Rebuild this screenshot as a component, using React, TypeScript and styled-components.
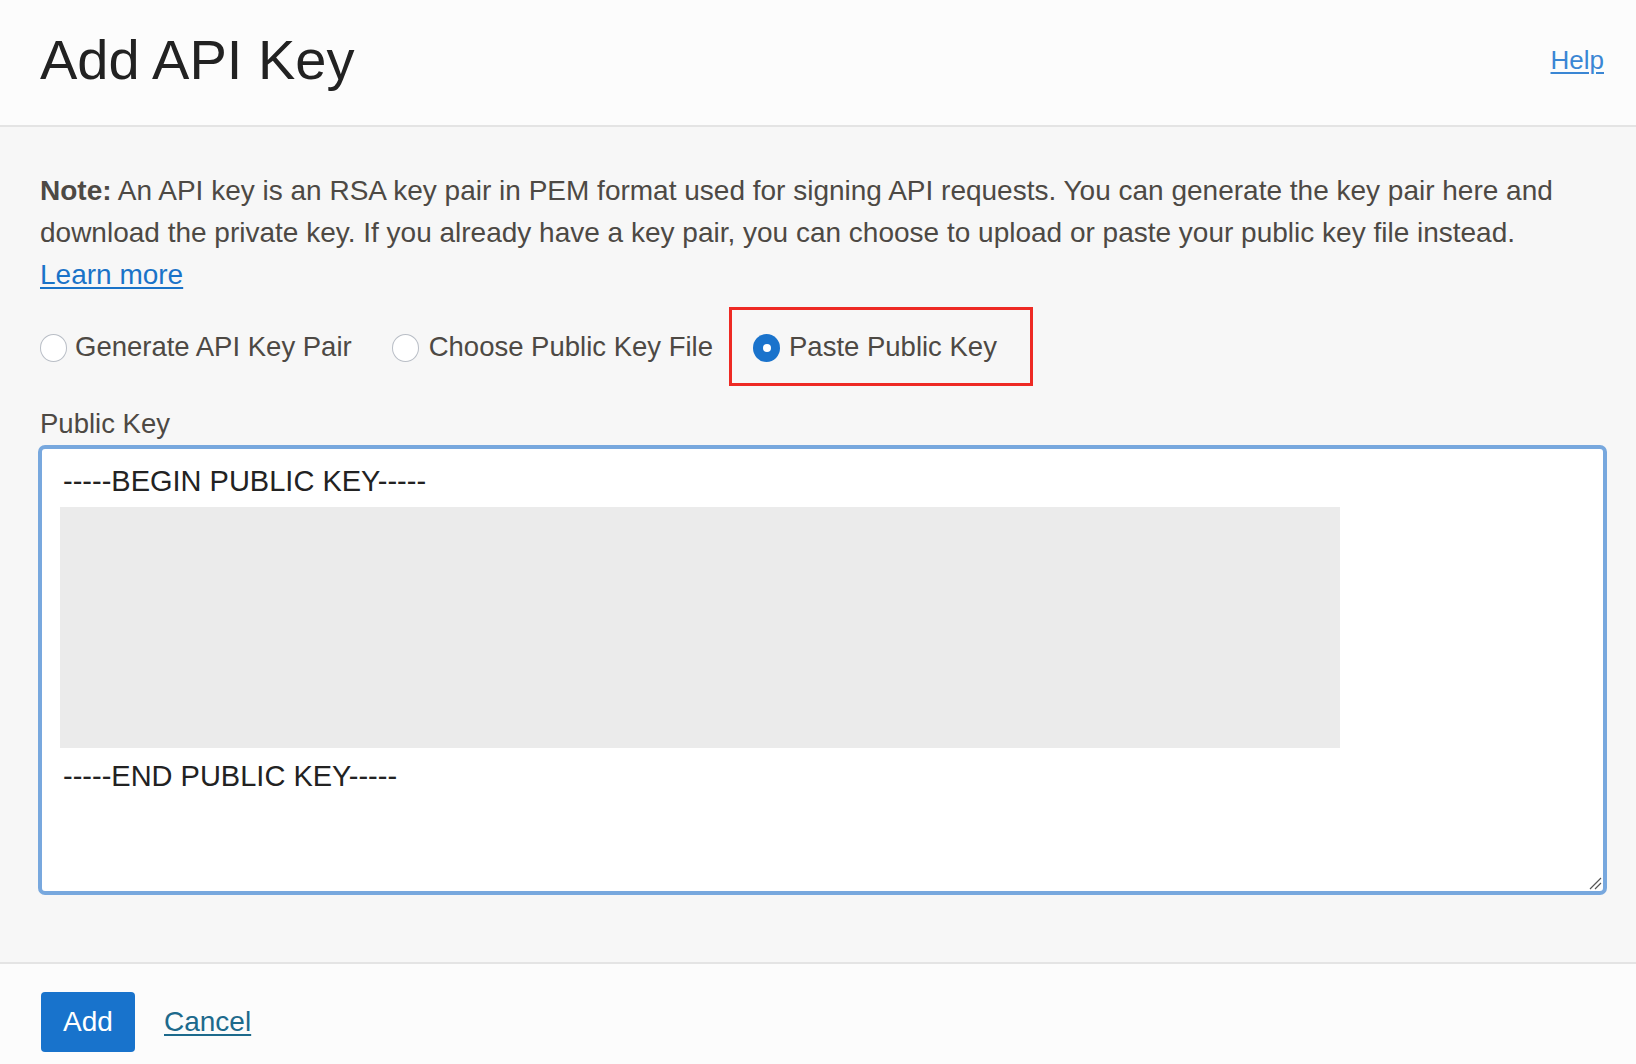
import React from "react";
import styled, { createGlobalStyle } from "styled-components";

const Global = createGlobalStyle`
  html, body { margin: 0; padding: 0; }
  body {
    background: #f7f7f7;
    font-family: "Liberation Sans", Arial, Helvetica, sans-serif;
    -webkit-font-smoothing: antialiased;
  }
`;

const Page = styled.div`
  width: 1636px;
  height: 1064px;
  display: flex;
  flex-direction: column;
  background: #f7f7f7;
  overflow: hidden;
`;

const Header = styled.header`
  box-sizing: content-box;
  display: flex;
  justify-content: space-between;
  align-items: flex-start;
  padding: 28px 32px 0 40px;
  height: 97px;
  flex: none;
  background: #fcfcfc;
  border-bottom: 2px solid #e4e4e4;
`;

const Title = styled.h1`
  margin: 0;
  font-size: 56px;
  line-height: 64px;
  font-weight: 400;
  color: #222;
`;

const HelpLink = styled.a`
  margin-top: 17px;
  font-size: 26px;
  line-height: 30px;
  color: #3a86d4;
  text-decoration: underline;
  text-underline-offset: 3px;
  font-weight: 300;
`;

const Body = styled.main`
  flex: 1;
  padding: 43px 29px 0 40px;
`;

const Note = styled.p`
  margin: 0;
  font-size: 28px;
  line-height: 42px;
  color: #4d4944;
`;

const Strong = styled.strong`
  font-weight: 700;
`;

const TextLink = styled.a`
  color: #1a73c8;
  text-decoration: underline;
  text-underline-offset: 3px;
  white-space: nowrap;
`;

const RadioGroup = styled.div`
  display: flex;
  align-items: center;
  gap: 40px;
  margin-top: 11px;
  height: 79px;
`;

const Option = styled.label<{ $gap: number }>`
  display: flex;
  align-items: center;
  gap: ${(p) => p.$gap}px;
  font-size: 27.5px;
  line-height: 32px;
  color: #4d4944;
`;

const Highlight = styled.div`
  display: flex;
  align-items: center;
  height: 79px;
  box-sizing: border-box;
  margin-left: -24px;
  padding: 0 33px 0 21px;
  border: 3px solid #ee2a24;
`;

const Circle = styled.span<{ $checked?: boolean }>`
  width: 27px;
  height: 28px;
  border-radius: 50%;
  box-sizing: border-box;
  flex: none;
  display: flex;
  align-items: center;
  justify-content: center;
  background: ${(p) => (p.$checked ? "#1a73cc" : "#ffffff")};
  border: ${(p) => (p.$checked ? "none" : "1.5px solid #b9bec6")};
  margin-top: 3px;
`;

const Dot = styled.span`
  width: 8px;
  height: 8px;
  border-radius: 50%;
  background: #fff;
`;

const FieldLabel = styled.div`
  margin-top: 22px;
  font-size: 27.5px;
  line-height: 32px;
  color: #4d4944;
`;

const KeyBox = styled.div`
  position: relative;
  margin: 5px 0 0 -2px;
  height: 450px;
  box-sizing: border-box;
  background: #fff;
  border: 4px solid #78a8de;
  border-radius: 7px;
  padding: 17px 20px 0 18px;
  display: flex;
  flex-direction: column;
  align-items: flex-start;
`;

const KeyLine = styled.div`
  font-size: 29px;
  line-height: 30px;
  color: #222;
  padding-left: 3px;
`;

const Redaction = styled.div`
  width: 1280px;
  height: 241px;
  background: #ebebeb;
  margin: 11px 0 13px;
`;

const Grip = styled.svg`
  position: absolute;
  right: 1px;
  bottom: 1px;
`;

const Footer = styled.footer`
  height: 72px;
  flex: none;
  background: #fcfcfc;
  border-top: 2px solid #e4e4e4;
  display: flex;
  align-items: flex-start;
  padding: 28px 0 0 41px;
`;

const FooterInner = styled.div`
  display: flex;
  align-items: center;
  gap: 29px;
  height: 60px;
`;

const PrimaryButton = styled.button`
  width: 94px;
  height: 60px;
  border: none;
  border-radius: 4px;
  background: #1873cc;
  color: #fff;
  font-family: inherit;
  font-size: 28px;
  padding: 0;
`;

const CancelLink = styled.a`
  font-size: 28px;
  line-height: 32px;
  color: #1d6a8c;
  text-decoration: underline;
  text-underline-offset: 3px;
`;

export default function App() {
  return (
    <>
      <Global />
      <Page>
        <Header>
          <Title>Add API Key</Title>
          <HelpLink href="#">Help</HelpLink>
        </Header>
        <Body>
          <Note>
            <Strong>Note:</Strong> An API key is an RSA key pair in PEM format used for signing API
            requests. You can generate the key pair here and download the private key. If you already
            have a key pair, you can choose to upload or paste your public key file instead.{" "}
            <TextLink href="#">Learn more</TextLink>
          </Note>
          <RadioGroup>
            <Option $gap={8}>
              <Circle />
              Generate API Key Pair
            </Option>
            <Option $gap={10}>
              <Circle />
              Choose Public Key File
            </Option>
            <Highlight>
              <Option $gap={9}>
                <Circle $checked>
                  <Dot />
                </Circle>
                Paste Public Key
              </Option>
            </Highlight>
          </RadioGroup>
          <FieldLabel>Public Key</FieldLabel>
          <KeyBox>
            <KeyLine>-----BEGIN PUBLIC KEY-----</KeyLine>
            <Redaction />
            <KeyLine>-----END PUBLIC KEY-----</KeyLine>
            <Grip width="14" height="14" viewBox="0 0 14 14">
              <path d="M13 2 L2 13 M13 7 L7 13" stroke="#555" strokeWidth="1.2" fill="none" />
            </Grip>
          </KeyBox>
        </Body>
        <Footer>
          <FooterInner>
            <PrimaryButton>Add</PrimaryButton>
            <CancelLink href="#">Cancel</CancelLink>
          </FooterInner>
        </Footer>
      </Page>
    </>
  );
}
